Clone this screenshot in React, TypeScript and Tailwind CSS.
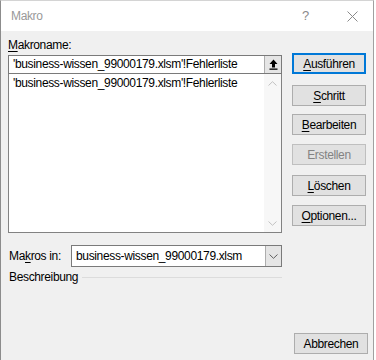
import React from "react";

const font = { fontFamily: '"Segoe UI", "Liberation Sans", Arial, sans-serif' };

function Key({ children }: { children: React.ReactNode }) {
  return <span className="underline underline-offset-[2px] decoration-[1px]">{children}</span>;
}

function DlgButton({
  children,
  className = "",
  primary = false,
  disabled = false,
}: {
  children: React.ReactNode;
  className?: string;
  primary?: boolean;
  disabled?: boolean;
}) {
  let look = "border border-[#adadad] text-black";
  if (primary) look = "border-2 border-[#0078d7] text-black";
  if (disabled) look = "border border-[#bfbfbf] text-[#838383]";
  return (
    <div
      className={`flex h-[21px] w-[74px] items-center justify-center bg-[#e1e1e1] text-[12px] leading-none ${look} ${className}`}
    >
      {children}
    </div>
  );
}

function Chevron({ up, color }: { up?: boolean; color: string }) {
  return (
    <svg width="9" height="5" viewBox="0 0 9 5" fill="none">
      <path
        d={up ? "M0.5 4.5 L4.5 0.7 L8.5 4.5" : "M0.5 0.5 L4.5 4.3 L8.5 0.5"}
        stroke={color}
        strokeWidth="1"
      />
    </svg>
  );
}

export default function App() {
  const macro = "'business-wissen_99000179.xlsm'!Fehlerliste";
  return (
    <div className="flex h-[360px] w-[376px] bg-white tracking-[-0.35px]" style={font}>
      <div className="flex h-full w-[374px] flex-col border-l border-r border-t border-l-[#8c8c8c] border-r-[#a0a0a0] border-t-[#d4d4d4]">
        {/* Title bar */}
        <div className="flex h-[30px] items-center bg-white pl-[10px] text-[12px] text-[#999999]">
          <span>Makro</span>
          <span className="ml-auto mr-[38px] text-[13px] text-[#8a8a8a]">?</span>
          <svg width="11" height="11" viewBox="0 0 11 11" className="mr-[15px]">
            <path d="M0.5 0.5 L10.5 10.5 M10.5 0.5 L0.5 10.5" stroke="#8a8a8a" strokeWidth="1" />
          </svg>
        </div>

        {/* Body */}
        <div className="flex flex-1 bg-[#f0f0f0] pl-[7px] text-[12px] text-black">
          {/* Left column */}
          <div className="flex w-[274px] flex-col pt-[6px]">
            <div className="h-[16px] leading-[16px]">
              <Key>M</Key>akroname:
            </div>
            <div className="mt-[2px] flex h-[19px] border border-[#7a7a7a] bg-white">
              <div className="flex-1 pl-[4px] leading-[17px]">{macro}</div>
              <div className="flex w-[17px] items-center justify-center border-l border-[#adadad] bg-[#e5e5e5]">
                <svg width="9" height="11" viewBox="0 0 9 11">
                  <path d="M4.5 0.5 L8.5 5 L6 5 L6 8.5 L3 8.5 L3 5 L0.5 5 Z" fill="#000" />
                  <rect x="0.5" y="9.5" width="8" height="1.3" fill="#000" />
                </svg>
              </div>
            </div>
            <div className="flex h-[159px] border border-t-0 border-[#828282] bg-white">
              <div className="flex-1 pl-[4px] pt-[1px] leading-[16px]">{macro}</div>
              <div className="flex w-[17px] flex-col items-center justify-between bg-[#f7f7f7] pb-[6px] pt-[7px]">
                <Chevron up color="#c2c2c2" />
                <Chevron color="#c2c2c2" />
              </div>
            </div>

            <div className="mt-[12px] flex items-center">
              <div className="w-[63px] pl-[1px]">
                Ma<Key>k</Key>ros in:
              </div>
              <div className="flex h-[22px] flex-1 border border-[#7a7a7a] bg-white">
                <div className="flex-1 pl-[4px] leading-[20px]">business-wissen_99000179.xlsm</div>
                <div className="flex w-[16px] items-center justify-center border-l border-[#adadad] bg-[#e5e5e5]">
                  <Chevron color="#606060" />
                </div>
              </div>
            </div>

            <div className="mt-[2px] flex h-[16px] items-center">
              <span className="pl-[1px] leading-[16px]">Beschreibung</span>
              <div className="ml-[4px] h-px flex-1 bg-[#dcdcdc]" />
            </div>
          </div>

          {/* Right column */}
          <div className="ml-[10px] flex flex-col pb-[6px]">
            <DlgButton primary className="mt-[22px]">
              <Key>A</Key>usführen
            </DlgButton>
            <DlgButton className="mt-[11px]">
              <Key>S</Key>chritt
            </DlgButton>
            <DlgButton className="mt-[8px]">
              <Key>B</Key>earbeiten
            </DlgButton>
            <DlgButton disabled className="mt-[9px]">
              Erstellen
            </DlgButton>
            <DlgButton className="mt-[10px]">
              <Key>L</Key>öschen
            </DlgButton>
            <DlgButton className="mt-[9px]">
              <Key>O</Key>ptionen...
            </DlgButton>
            <DlgButton className="ml-[2px] mt-auto">Abbrechen</DlgButton>
          </div>
        </div>
      </div>
    </div>
  );
}
